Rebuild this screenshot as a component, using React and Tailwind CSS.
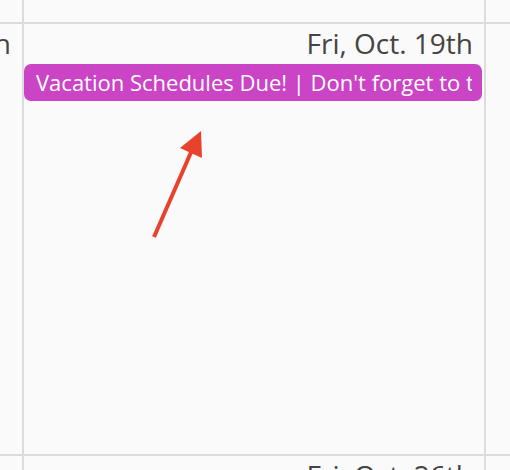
import React from 'react';

const font = { fontFamily: '"Open Sans", "Noto Sans", sans-serif' };

function DayCell({ label, children }) {
  return (
    <div className="bg-[#fafafa] overflow-hidden min-w-0">
      {label && (
        <div className="flex justify-end pr-[11px] h-[40px] text-[28px] leading-[38px] text-[#444] whitespace-nowrap">
          {label}
        </div>
      )}
      {children}
    </div>
  );
}

export default function App() {
  return (
    <div className="relative w-[510px] h-[470px] overflow-hidden bg-[#dcdcdc]" style={font}>
      <div className="grid grid-cols-[22px_460px_24px] grid-rows-[22px_430px_40px] gap-[2px]">
        <DayCell />
        <DayCell />
        <DayCell />

        <DayCell label="Thu, Oct. 18th" />
        <DayCell label="Fri, Oct. 19th">
          <div className="mr-[2px] h-[37px] rounded-[7px] bg-[#cb44c6] text-white text-[22px] leading-[37px] pl-[12px] pr-[10px]">
            <div className="overflow-hidden whitespace-nowrap">
              Vacation Schedules Due! | Don't forget to turn in your schedules
            </div>
          </div>
        </DayCell>
        <DayCell />

        <DayCell label="Thu, Oct. 25th" />
        <DayCell label="Fri, Oct. 26th" />
        <DayCell />
      </div>

      {/* annotation arrow */}
      <svg className="absolute left-0 top-0" width="510" height="470" viewBox="0 0 510 470">
        <line x1="154" y1="237" x2="192" y2="150" stroke="#e8412c" strokeWidth="4" />
        <polygon points="201,131 180,148 202,158" fill="#e8412c" />
      </svg>
    </div>
  );
}
